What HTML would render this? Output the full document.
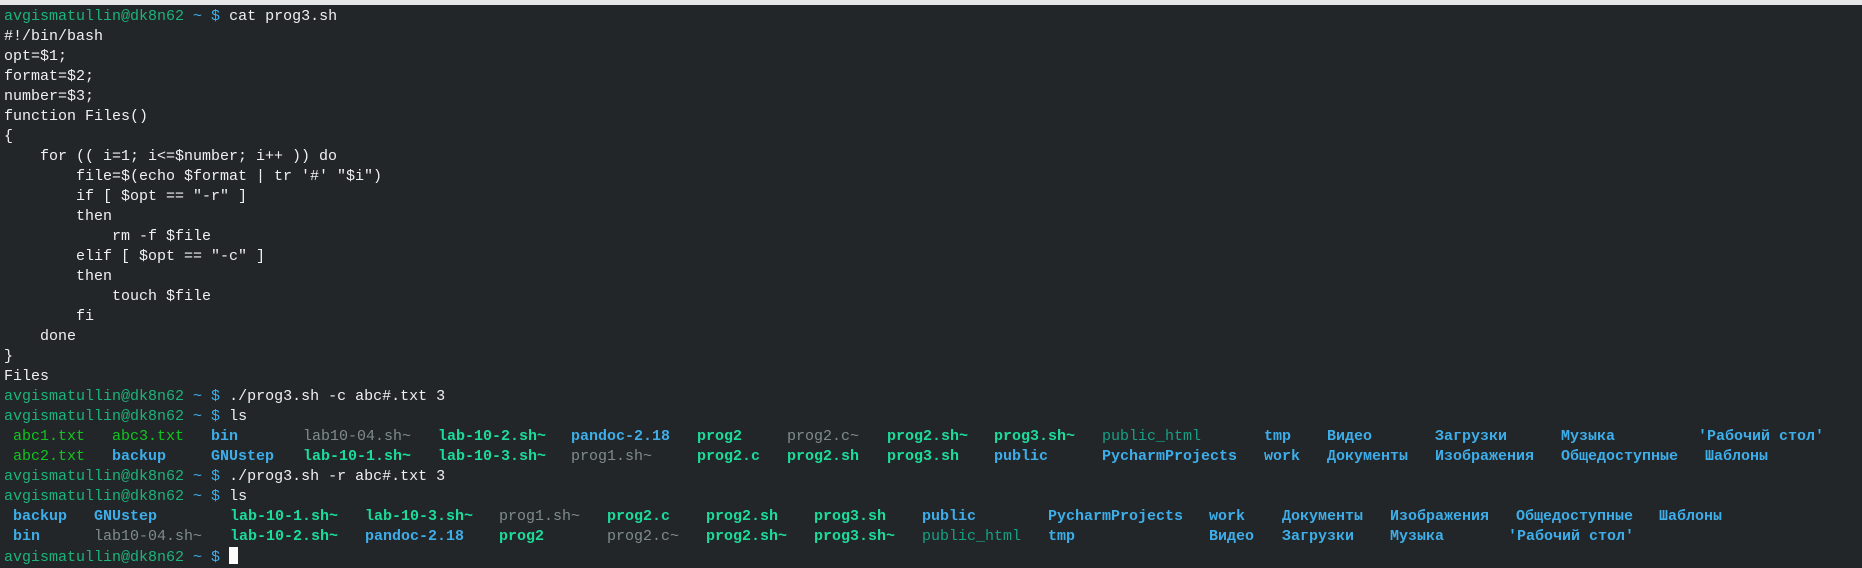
<!DOCTYPE html>
<html><head><meta charset="utf-8"><style>
html,body{margin:0;padding:0;width:1862px;height:554px;overflow:hidden;background:#232629;}
.top{position:absolute;left:0;top:0;width:1862px;height:5px;background:#e6e6e8;}
.t{position:absolute;left:4px;top:7px;font-family:"Liberation Mono","DejaVu Sans Mono",monospace;font-size:15px;line-height:20px;color:#eff0f1;}
.r{height:20px;position:relative;white-space:pre;}
.g{color:#1cb47a}.b{color:#3daee9}
.s{position:absolute;top:0}
.d{color:#3daee9;font-weight:bold}
.x{color:#1cdc9a;font-weight:bold}
.y{color:#7f8c8d}
.f{color:#11c520}
.h{color:#16a085}
.cur{display:inline-block;width:9px;height:17px;background:#fcfcfc;vertical-align:-3px}
</style></head><body>
<div class="top"></div>
<div class="t"><div class="r"><span class="g">avgismatullin@dk8n62</span> <span class="b">~ $</span> cat prog3.sh</div><div class="r">#!/bin/bash</div><div class="r">opt=$1;</div><div class="r">format=$2;</div><div class="r">number=$3;</div><div class="r">function Files()</div><div class="r">{</div><div class="r">    for (( i=1; i&lt;=$number; i++ )) do</div><div class="r">        file=$(echo $format | tr '#' "$i")</div><div class="r">        if [ $opt == "-r" ]</div><div class="r">        then</div><div class="r">            rm -f $file</div><div class="r">        elif [ $opt == "-c" ]</div><div class="r">        then</div><div class="r">            touch $file</div><div class="r">        fi</div><div class="r">    done</div><div class="r">}</div><div class="r">Files</div><div class="r"><span class="g">avgismatullin@dk8n62</span> <span class="b">~ $</span> ./prog3.sh -c abc#.txt 3</div><div class="r"><span class="g">avgismatullin@dk8n62</span> <span class="b">~ $</span> ls</div><div class="r"><span class="s f" style="left:9px">abc1.txt</span><span class="s f" style="left:108px">abc3.txt</span><span class="s d" style="left:207px">bin</span><span class="s y" style="left:299px">lab10-04.sh~</span><span class="s x" style="left:434px">lab-10-2.sh~</span><span class="s d" style="left:567px">pandoc-2.18</span><span class="s x" style="left:693px">prog2</span><span class="s y" style="left:783px">prog2.c~</span><span class="s x" style="left:883px">prog2.sh~</span><span class="s x" style="left:990px">prog3.sh~</span><span class="s h" style="left:1098px">public_html</span><span class="s d" style="left:1260px">tmp</span><span class="s d" style="left:1323px">Видео</span><span class="s d" style="left:1431px">Загрузки</span><span class="s d" style="left:1557px">Музыка</span><span class="s d" style="left:1694px">'Рабочий стол'</span></div><div class="r"><span class="s f" style="left:9px">abc2.txt</span><span class="s d" style="left:108px">backup</span><span class="s d" style="left:207px">GNUstep</span><span class="s x" style="left:299px">lab-10-1.sh~</span><span class="s x" style="left:434px">lab-10-3.sh~</span><span class="s y" style="left:567px">prog1.sh~</span><span class="s x" style="left:693px">prog2.c</span><span class="s x" style="left:783px">prog2.sh</span><span class="s x" style="left:883px">prog3.sh</span><span class="s d" style="left:990px">public</span><span class="s d" style="left:1098px">PycharmProjects</span><span class="s d" style="left:1260px">work</span><span class="s d" style="left:1323px">Документы</span><span class="s d" style="left:1431px">Изображения</span><span class="s d" style="left:1557px">Общедоступные</span><span class="s d" style="left:1701px">Шаблоны</span></div><div class="r"><span class="g">avgismatullin@dk8n62</span> <span class="b">~ $</span> ./prog3.sh -r abc#.txt 3</div><div class="r"><span class="g">avgismatullin@dk8n62</span> <span class="b">~ $</span> ls</div><div class="r"><span class="s d" style="left:9px">backup</span><span class="s d" style="left:90px">GNUstep</span><span class="s x" style="left:226px">lab-10-1.sh~</span><span class="s x" style="left:361px">lab-10-3.sh~</span><span class="s y" style="left:495px">prog1.sh~</span><span class="s x" style="left:603px">prog2.c</span><span class="s x" style="left:702px">prog2.sh</span><span class="s x" style="left:810px">prog3.sh</span><span class="s d" style="left:918px">public</span><span class="s d" style="left:1044px">PycharmProjects</span><span class="s d" style="left:1205px">work</span><span class="s d" style="left:1278px">Документы</span><span class="s d" style="left:1386px">Изображения</span><span class="s d" style="left:1512px">Общедоступные</span><span class="s d" style="left:1655px">Шаблоны</span></div><div class="r"><span class="s d" style="left:9px">bin</span><span class="s y" style="left:90px">lab10-04.sh~</span><span class="s x" style="left:226px">lab-10-2.sh~</span><span class="s d" style="left:361px">pandoc-2.18</span><span class="s x" style="left:495px">prog2</span><span class="s y" style="left:603px">prog2.c~</span><span class="s x" style="left:702px">prog2.sh~</span><span class="s x" style="left:810px">prog3.sh~</span><span class="s h" style="left:918px">public_html</span><span class="s d" style="left:1044px">tmp</span><span class="s d" style="left:1205px">Видео</span><span class="s d" style="left:1278px">Загрузки</span><span class="s d" style="left:1386px">Музыка</span><span class="s d" style="left:1504px">'Рабочий стол'</span></div><div class="r"><span class="g">avgismatullin@dk8n62</span> <span class="b">~ $</span> <span class="cur"></span></div></div>
</body></html>
